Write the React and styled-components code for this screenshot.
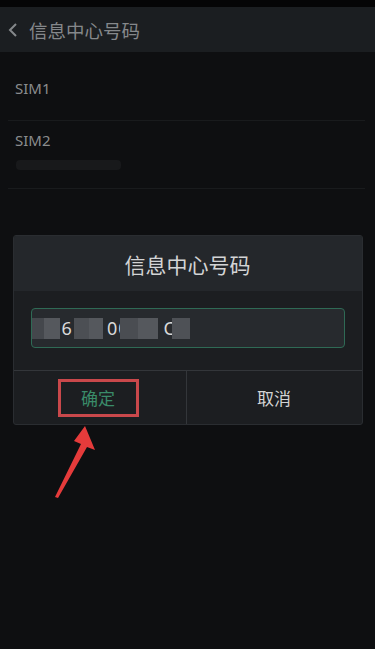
import React from "react";
import styled, { createGlobalStyle } from "styled-components";

const Global = createGlobalStyle`
  html, body { margin: 0; padding: 0; background: #0d0e10; }
  body { font-family: "Noto Sans CJK SC", "Noto Sans", sans-serif; }
  #root { width: 375px; height: 649px; overflow: hidden; }
`;

const Screen = styled.div`
  position: relative;
  width: 375px;
  height: 649px;
  background: #0e0f11;
  display: flex;
  flex-direction: column;
`;

const StatusBar = styled.div`
  height: 7px;
  background: #050506;
`;

const Header = styled.div`
  height: 45px;
  background: #1b1e21;
  display: flex;
  align-items: center;
  padding-left: 8px;
  gap: 11px;
  color: #85888b;
  font-size: 18.5px;
`;

const List = styled.div`
  padding: 0 10px 0 8px;
`;

const Row = styled.div`
  border-bottom: 1px solid #191b1d;
  padding: ${(p) => (p.$tall ? "9px 0 18px 7px" : "26px 0 22px 7px")};
  display: flex;
  flex-direction: column;
  gap: 10px;
`;

const RowLabel = styled.div`
  font-family: "Noto Sans", sans-serif;
  font-size: 15px;
  line-height: 20px;
  color: #8a8c8e;
`;

const BlurText = styled.div`
  width: 105px;
  height: 10px;
  border-radius: 4px;
  background: #18191b;
  margin-left: 1px;
`;

const Overlay = styled.div`
  flex: 1;
  display: flex;
  flex-direction: column;
  align-items: center;
  padding-top: 46px;
`;

const Dialog = styled.div`
  width: 348px;
  border-radius: 3px;
  overflow: hidden;
  background: #1c1e21;
  border: 1px solid #2a2d31;
`;

const DialogTitle = styled.div`
  height: 55px;
  background: #24272b;
  display: flex;
  align-items: center;
  justify-content: center;
  color: #d3d4d5;
  font-size: 21px;
`;

const DialogBody = styled.div`
  padding: 17px 17px 22px 17px;
  border-bottom: 1px solid #33363a;
`;

const Input = styled.div`
  position: relative;
  height: 38px;
  border: 1px solid #2f6a55;
  border-radius: 4px;
  background: #272a2e;
  display: flex;
  align-items: center;
  padding-left: 30px;
  font-family: "Noto Sans", sans-serif;
  font-size: 18px;
  color: #d9d9d9;
  letter-spacing: 1px;
`;

const Mosaic = styled.span`
  position: absolute;
  top: 9px;
  height: 21px;
  background: ${(p) => p.$c};
`;

const Buttons = styled.div`
  display: grid;
  grid-template-columns: 173px 1fr;
  height: 53px;
`;

const Btn = styled.div`
  display: flex;
  align-items: center;
  justify-content: center;
  font-size: 17px;
  color: ${(p) => (p.$primary ? "#3a8b69" : "#d3d4d5")};
  border-right: ${(p) => (p.$primary ? "1px solid #33363a" : "none")};
  padding-right: ${(p) => (p.$primary ? "3px" : "0")};
`;

const Highlight = styled.div`
  border: 3px solid #c9484b;
  width: 81px;
  height: 38px;
  box-sizing: border-box;
  display: flex;
  align-items: center;
  justify-content: center;
`;

const Arrow = styled.svg`
  position: absolute;
  left: 50px;
  top: 420px;
`;

export default function App() {
  return (
    <>
      <Global />
      <Screen>
        <StatusBar />
        <Header>
          <svg width="10" height="16" viewBox="0 0 10 16">
            <path d="M8 2 L2 8 L8 14" fill="none" stroke="#85888b" strokeWidth="2" />
          </svg>
          <span>信息中心号码</span>
        </Header>
        <List>
          <Row>
            <RowLabel>SIM1</RowLabel>
          </Row>
          <Row $tall>
            <RowLabel>SIM2</RowLabel>
            <BlurText />
          </Row>
        </List>
        <Overlay>
          <Dialog>
            <DialogTitle>信息中心号码</DialogTitle>
            <DialogBody>
              <Input>
                6&nbsp;&nbsp;&nbsp;&nbsp;&nbsp;&nbsp;00&nbsp;&nbsp;&nbsp;&nbsp;&nbsp;&nbsp;C
                <Mosaic $c="#44474c" style={{ left: 0, width: 28 }} />
                <Mosaic $c="#55585d" style={{ left: 12, width: 16 }} />
                <Mosaic $c="#4c4f54" style={{ left: 42, width: 28 }} />
                <Mosaic $c="#55585d" style={{ left: 57, width: 14 }} />
                <Mosaic $c="#4a4d52" style={{ left: 88, width: 38 }} />
                <Mosaic $c="#55585d" style={{ left: 106, width: 20 }} />
                <Mosaic $c="#4e5156" style={{ left: 140, width: 18 }} />
              </Input>
            </DialogBody>
            <Buttons>
              <Btn $primary>
                <Highlight>确定</Highlight>
              </Btn>
              <Btn>取消</Btn>
            </Buttons>
          </Dialog>
        </Overlay>
        <Arrow width="50" height="85" viewBox="0 0 50 85">
          <path d="M35 6 L45 30 L37 27 L8 78 L5 77 L31 24 L24 21 Z" fill="#e53b3b" />
        </Arrow>
      </Screen>
    </>
  );
}
